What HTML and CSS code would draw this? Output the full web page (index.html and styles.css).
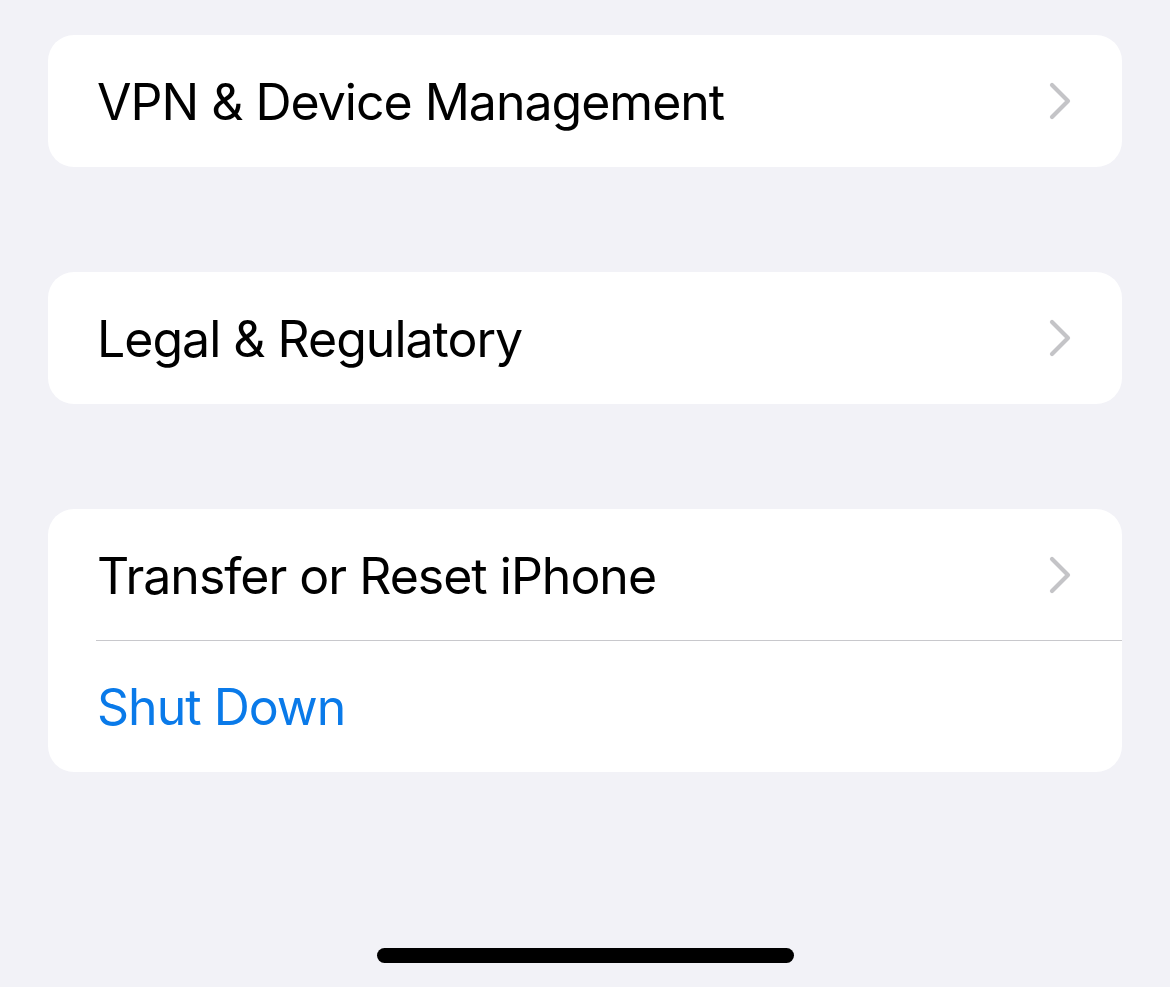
FILE: index.html
```html
<!DOCTYPE html>
<html>
<head>
<meta charset="utf-8">
<link rel="stylesheet" href="styles.css">
</head>
<body>
<main class="screen">
  <section class="group">
    <div class="row">
      <span class="label">VPN &amp; Device Management</span>
      <svg class="chev" width="24" height="38" viewBox="0 0 24 38"><path d="M3 3 L19 19 L3 35" fill="none" stroke="#c4c4c7" stroke-width="4.2" stroke-linecap="round" stroke-linejoin="round"/></svg>
    </div>
  </section>
  <section class="group">
    <div class="row">
      <span class="label">Legal &amp; Regulatory</span>
      <svg class="chev" width="24" height="38" viewBox="0 0 24 38"><path d="M3 3 L19 19 L3 35" fill="none" stroke="#c4c4c7" stroke-width="4.2" stroke-linecap="round" stroke-linejoin="round"/></svg>
    </div>
  </section>
  <section class="group">
    <div class="row divided">
      <span class="label">Transfer or Reset iPhone</span>
      <svg class="chev" width="24" height="38" viewBox="0 0 24 38"><path d="M3 3 L19 19 L3 35" fill="none" stroke="#c4c4c7" stroke-width="4.2" stroke-linecap="round" stroke-linejoin="round"/></svg>
    </div>
    <div class="row">
      <span class="label action">Shut Down</span>
    </div>
  </section>
  <div class="home-bar"></div>
</main>
</body>
</html>
```

FILE: styles.css
```css
html, body {
  margin: 0;
  padding: 0;
  background: #f2f2f7;
}
.screen {
  width: 1170px;
  height: 987px;
  box-sizing: border-box;
  padding: 35px 48px 0 48px;
  display: flex;
  flex-direction: column;
  gap: 105.5px;
  font-family: "Inter", "Liberation Sans", sans-serif;
}
.group {
  background: #ffffff;
  border-radius: 26px;
  overflow: hidden;
}
.row {
  height: 131.5px;
  display: flex;
  align-items: center;
  justify-content: space-between;
  padding: 0 48px 0 49px;
  position: relative;
}
.row.divided::after {
  content: "";
  position: absolute;
  left: 48px;
  right: 0;
  bottom: 0;
  height: 1px;
  background: #c8c8cc;
}
.label {
  font-size: 50px;
  color: #000;
  letter-spacing: -1px;
  line-height: 1;
  padding-top: 2px;
}
.label.action {
  color: #0a7ae9;
}
.chev {
  display: block;
  margin-right: 1px;
}
.home-bar {
  margin: 70px auto 0 auto;
  width: 417px;
  height: 15px;
  border-radius: 8px;
  background: #000;
}
```
